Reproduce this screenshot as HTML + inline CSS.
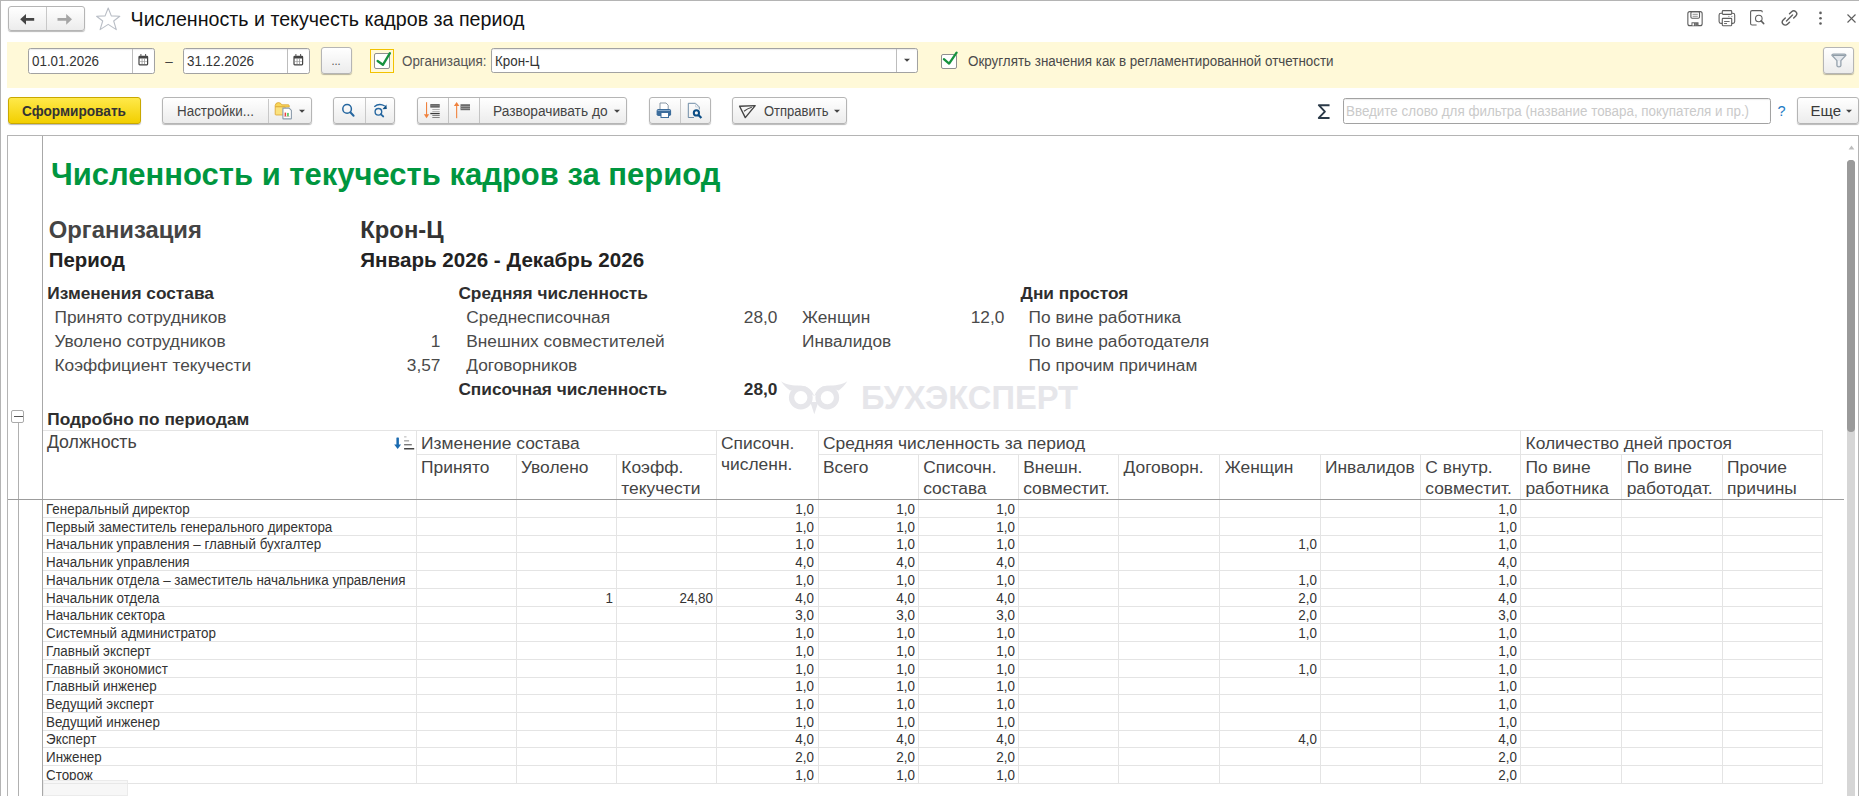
<!DOCTYPE html>
<html><head><meta charset="utf-8"><style>
html,body{margin:0;padding:0;}
body{width:1861px;height:796px;position:relative;overflow:hidden;background:#fff;font-family:"Liberation Sans",sans-serif;}
.t{position:absolute;white-space:pre;line-height:1;}
.r{position:absolute;}
</style></head><body>
<div class="r" style="left:0px;top:0px;width:1859px;height:1.2px;background:#b4b4b4;"></div>
<div class="r" style="left:0px;top:0px;width:1.2px;height:796px;background:#b4b4b4;"></div>
<div class="r" style="left:7.5px;top:6px;width:77px;height:25px;border:1px solid #b5b5b5;border-radius:3px;background:linear-gradient(#ffffff,#ececec);box-shadow:0 1px 1px rgba(0,0,0,0.28);box-sizing:border-box;"></div>
<div class="r" style="left:46px;top:7px;width:1px;height:23px;background:#c8c8c8;"></div>
<svg class="r" style="left:19px;top:12px;" width="16" height="14" viewBox="0 0 16 14"><path d="M1.2 7.3 L7 1.9 L7 5.9 L15.2 5.9 L15.2 8.7 L7 8.7 L7 12.8 Z" fill="#454545"/></svg>
<svg class="r" style="left:57px;top:12px;" width="16" height="14" viewBox="0 0 16 14"><path d="M15 7.3 L9.2 1.9 L9.2 5.9 L0.5 5.9 L0.5 8.7 L9.2 8.7 L9.2 12.8 Z" fill="#a5a5a5"/></svg>
<svg class="r" style="left:92px;top:4px;" width="32" height="30" viewBox="0 0 32 30"><path d="M16.2 4 L19.3 11.9 L27.8 12.3 L21.7 17 L24.3 25.6 L16.2 20.4 L8.1 25.6 L10.7 17 L4.6 12.3 L13.1 11.9 Z" fill="none" stroke="#b9bec6" stroke-width="1.1" stroke-linejoin="round"/></svg>
<div class="t" style="left:130.60px;top:10.00px;font-size:19.65px;color:#111;font-weight:normal;">Численность и текучесть кадров за период</div>
<svg class="r" style="left:1680px;top:5px;" width="60" height="27" viewBox="0 0 60 27"><rect x="7.85" y="6.65" width="14.3" height="14" rx="2" fill="none" stroke="#5e5e5e" stroke-width="1.1"/><rect x="10.9" y="6.6" width="8.6" height="6.7" rx="1.2" fill="none" stroke="#5e5e5e" stroke-width="1.1"/><line x1="12.6" y1="9.3" x2="17.8" y2="9.3" stroke="#888" stroke-width="0.9"/><line x1="12.6" y1="11.3" x2="17.8" y2="11.3" stroke="#888" stroke-width="0.9"/><rect x="11.5" y="17.3" width="7" height="3.5" fill="#5e5e5e"/><rect x="12.4" y="18.3" width="1.7" height="2.2" fill="#fff"/><rect x="15.6" y="18.2" width="0.4" height="2.6" fill="#bbb"/><rect x="16.8" y="18.2" width="0.4" height="2.6" fill="#bbb"/><rect x="39.1" y="8.3" width="15.6" height="10.1" rx="1.8" fill="none" stroke="#5e5e5e" stroke-width="1.1"/><rect x="42.3" y="5.6" width="9.4" height="3.8" rx="0.8" fill="#fff" stroke="#5e5e5e" stroke-width="1.1"/><rect x="42.3" y="13.4" width="9.4" height="7.3" rx="0.6" fill="#fff" stroke="#5e5e5e" stroke-width="1.1"/><line x1="44.1" y1="16.5" x2="49.6" y2="16.5" stroke="#5e5e5e" stroke-width="0.9"/><line x1="44.1" y1="18.5" x2="47" y2="18.5" stroke="#5e5e5e" stroke-width="0.9"/><rect x="48.3" y="10.9" width="1.1" height="0.9" fill="#777"/><rect x="51.3" y="10.9" width="1.1" height="0.9" fill="#777"/></svg>
<svg class="r" style="left:1749px;top:9px;" width="19" height="18" viewBox="0 0 19 18"><path d="M13.3 3.3 V3 Q13.3 1.6 11.9 1.6 H3.1 Q1.6 1.6 1.6 3.1 V14.6 Q1.6 16 3.1 16 H7.6" fill="none" stroke="#5e5e5e" stroke-width="1.1"/><circle cx="9.8" cy="9.5" r="3.3" fill="none" stroke="#5e5e5e" stroke-width="1.1"/><line x1="12.2" y1="12" x2="14.6" y2="14.5" stroke="#5e5e5e" stroke-width="1.8" stroke-linecap="round"/></svg>
<svg class="r" style="left:1780px;top:9px;" width="19" height="19" viewBox="0 0 19 19"><path d="M9.5 4.8 L11.6 2.7 A2.9 2.9 0 0 1 15.8 6.9 L13.7 9 M5.3 9 L3.2 11.1 A2.9 2.9 0 0 0 7.4 15.3 L9.5 13.2 M6.5 12 L12.5 6" fill="none" stroke="#5e5e5e" stroke-width="1.4" stroke-linecap="round"/></svg>
<svg class="r" style="left:1817px;top:10px;" width="7" height="17" viewBox="0 0 7 17"><circle cx="3.5" cy="2.9" r="1.3" fill="#5e5e5e"/><circle cx="3.5" cy="8.2" r="1.3" fill="#5e5e5e"/><circle cx="3.5" cy="13.5" r="1.3" fill="#5e5e5e"/></svg>
<svg class="r" style="left:1846px;top:13px;" width="11" height="11" viewBox="0 0 11 11"><path d="M1.5 1.5 L9.5 9.5 M9.5 1.5 L1.5 9.5" stroke="#5e5e5e" stroke-width="1.1"/></svg>
<div class="r" style="left:7px;top:42px;width:1852px;height:45.5px;background:#fff9d8;"></div>
<div class="r" style="left:27.5px;top:48px;width:127px;height:26px;border:1px solid #a2a2a2;border-radius:2.5px;background:#fff;box-sizing:border-box;box-shadow:inset 0 1px 1px rgba(0,0,0,0.08);"></div>
<div class="r" style="left:131.5px;top:49px;width:1px;height:24px;background:#bdbdbd;"></div>
<div class="t" style="left:31.70px;top:54.00px;font-size:14.47px;color:#333;font-weight:normal;transform:scaleX(0.9259);transform-origin:left top;">01.01.2026</div>
<svg class="r" style="left:137.8px;top:53.5px;" width="11" height="12" viewBox="0 0 11 12"><rect x="0.4" y="1.8" width="9.8" height="9.6" rx="1.3" fill="#444"/><rect x="1.6" y="4.5" width="7.4" height="5.7" fill="#fff"/><rect x="3.7" y="4.5" width="0.7" height="5.7" fill="#888"/><rect x="6.2" y="4.5" width="0.7" height="5.7" fill="#888"/><rect x="1.6" y="7.2" width="7.4" height="0.6" fill="#999"/><rect x="2.4" y="0" width="1" height="2.6" fill="#555"/><rect x="7.1" y="0" width="1" height="2.6" fill="#555"/></svg>
<div class="t" style="left:-231.40px;width:800px;text-align:center;top:54.00px;font-size:14.47px;color:#444;font-weight:normal;transform:scaleX(0.9259);transform-origin:center top;">–</div>
<div class="r" style="left:183px;top:48px;width:127px;height:26px;border:1px solid #a2a2a2;border-radius:2.5px;background:#fff;box-sizing:border-box;box-shadow:inset 0 1px 1px rgba(0,0,0,0.08);"></div>
<div class="r" style="left:287px;top:49px;width:1px;height:24px;background:#bdbdbd;"></div>
<div class="t" style="left:187.20px;top:54.00px;font-size:14.47px;color:#333;font-weight:normal;transform:scaleX(0.9259);transform-origin:left top;">31.12.2026</div>
<svg class="r" style="left:293.3px;top:53.5px;" width="11" height="12" viewBox="0 0 11 12"><rect x="0.4" y="1.8" width="9.8" height="9.6" rx="1.3" fill="#444"/><rect x="1.6" y="4.5" width="7.4" height="5.7" fill="#fff"/><rect x="3.7" y="4.5" width="0.7" height="5.7" fill="#888"/><rect x="6.2" y="4.5" width="0.7" height="5.7" fill="#888"/><rect x="1.6" y="7.2" width="7.4" height="0.6" fill="#999"/><rect x="2.4" y="0" width="1" height="2.6" fill="#555"/><rect x="7.1" y="0" width="1" height="2.6" fill="#555"/></svg>
<div class="r" style="left:321px;top:47.3px;width:30.5px;height:26.5px;border:1px solid #b5b5b5;border-radius:3px;background:linear-gradient(#ffffff,#ececec);box-shadow:0 1px 1px rgba(0,0,0,0.28);box-sizing:border-box;"></div>
<div class="t" style="left:-64.00px;width:800px;text-align:center;top:56.00px;font-size:11.88px;color:#555;font-weight:normal;transform:scaleX(0.9259);transform-origin:center top;">...</div>
<div class="r" style="left:369.5px;top:48.8px;width:24.5px;height:24.2px;border:1px solid #f2c200;box-sizing:border-box;"></div>
<div class="r" style="left:374px;top:53px;width:16px;height:15.5px;border:1px solid #8f8f8f;border-radius:2px;background:#fff;box-sizing:border-box;"></div>
<svg class="r" style="left:373px;top:49px;" width="20" height="20" viewBox="0 0 20 20"><path d="M4.6 12 L9.9 15.8 L16.9 4.2" fill="none" stroke="#16923e" stroke-width="2.3" stroke-linecap="round" stroke-linejoin="round"/></svg>
<div class="t" style="left:401.50px;top:54.00px;font-size:14.47px;color:#555;font-weight:normal;transform:scaleX(0.9259);transform-origin:left top;">Организация:</div>
<div class="r" style="left:490.8px;top:48.4px;width:427.5px;height:25px;border:1px solid #a2a2a2;border-radius:2.5px;background:#fff;box-sizing:border-box;box-shadow:inset 0 1px 1px rgba(0,0,0,0.08);"></div>
<div class="r" style="left:896px;top:49px;width:1px;height:23px;background:#bdbdbd;"></div>
<div class="t" style="left:495.00px;top:54.00px;font-size:14.47px;color:#333;font-weight:normal;transform:scaleX(0.9259);transform-origin:left top;">Крон-Ц</div>
<svg class="r" style="left:902.5px;top:58px;" width="8" height="5" viewBox="0 0 8 5"><path d="M1 0.8 H7 L4 3.8 Z" fill="#444"/></svg>
<div class="r" style="left:941px;top:53.5px;width:15.5px;height:15px;border:1px solid #8f8f8f;border-radius:2px;background:#fff;box-sizing:border-box;"></div>
<svg class="r" style="left:940px;top:48px;" width="20" height="20" viewBox="0 0 20 20"><path d="M3.9 11.2 L9.1 15.6 L16.6 4.6" fill="none" stroke="#16923e" stroke-width="2.3" stroke-linecap="round" stroke-linejoin="round"/></svg>
<div class="t" style="left:968.30px;top:54.00px;font-size:14.47px;color:#4a4a4a;font-weight:normal;transform:scaleX(0.9259);transform-origin:left top;">Округлять значения как в регламентированной отчетности</div>
<div class="r" style="left:1823.3px;top:47.3px;width:30.4px;height:26.4px;border:1px solid #b5b5b5;border-radius:3px;background:linear-gradient(#ffffff,#ececec);box-shadow:0 1px 1px rgba(0,0,0,0.28);box-sizing:border-box;"></div>
<svg class="r" style="left:1830px;top:52px;" width="18" height="17" viewBox="0 0 18 17"><path d="M1.9 3.2 Q1.9 2.2 3.4 2.2 H14.4 Q15.9 2.2 15.9 3.2 L10.9 8.6 V13.5 Q10.9 14.9 8.9 14.9 Q6.9 14.9 6.9 13.5 V8.6 Z" fill="#e3e7ec" stroke="#98a4af" stroke-width="1.3" stroke-linejoin="round"/><path d="M8.9 9 V13.3" stroke="#fff" stroke-width="0.9"/><path d="M3 3.4 H14.8" stroke="#8794a0" stroke-width="1"/></svg>
<div class="r" style="left:7.5px;top:97.3px;width:133px;height:26.7px;border:1px solid #c9a800;border-radius:3px;background:linear-gradient(#ffe94a,#f2cf00);box-shadow:0 1px 1px rgba(0,0,0,0.28);box-sizing:border-box;"></div>
<div class="t" style="left:-326.00px;width:800px;text-align:center;top:104.00px;font-size:14.74px;color:#333;font-weight:bold;transform:scaleX(0.9259);transform-origin:center top;">Сформировать</div>
<div class="r" style="left:162.3px;top:97.3px;width:149.5px;height:26.5px;border:1px solid #b5b5b5;border-radius:3px;background:linear-gradient(#ffffff,#ececec);box-shadow:0 1px 1px rgba(0,0,0,0.28);box-sizing:border-box;"></div>
<div class="r" style="left:268px;top:98.5px;width:1px;height:24.5px;background:#c8c8c8;"></div>
<div class="t" style="left:176.50px;top:104.00px;font-size:14.47px;color:#444;font-weight:normal;transform:scaleX(0.9259);transform-origin:left top;">Настройки...</div>
<svg class="r" style="left:273px;top:100px;" width="22" height="21" viewBox="0 0 22 21"><path d="M2.2 5.5 Q2.6 2.6 5.4 2.6 Q7.8 2.6 8.8 4.8 H15.4 Q16.2 4.8 16.2 5.8 V7 H2.2 Z" fill="#f8d659" stroke="#dba22e" stroke-width="0.8"/><rect x="2.2" y="6.8" width="10" height="8.2" rx="0.8" fill="#fbe27e" stroke="#dba22e" stroke-width="0.8"/><path d="M9.9 8.1 H16.1 L18.4 10.4 V18.4 Q18.4 18.9 17.9 18.9 H10.4 Q9.9 18.9 9.9 18.4 Z" fill="#fff" stroke="#8c9cac" stroke-width="1.1"/><rect x="11.6" y="12.6" width="1.5" height="3.8" fill="#e84040"/><rect x="14.2" y="12.9" width="1.5" height="3.5" fill="#3fbf4f"/><rect x="11.2" y="16.5" width="5.5" height="0.5" fill="#c9a0a0"/></svg>
<svg class="r" style="left:298px;top:109px;" width="8" height="5" viewBox="0 0 8 5"><path d="M1 0.8 H7 L4 3.8 Z" fill="#444"/></svg>
<div class="r" style="left:333.4px;top:97.2px;width:62px;height:26.8px;border:1px solid #b5b5b5;border-radius:3px;background:linear-gradient(#ffffff,#ececec);box-shadow:0 1px 1px rgba(0,0,0,0.28);box-sizing:border-box;"></div>
<div class="r" style="left:364.5px;top:98.2px;width:1px;height:25px;background:#c8c8c8;"></div>
<svg class="r" style="left:338px;top:100px;" width="20" height="20" viewBox="0 0 20 20"><circle cx="9.1" cy="8.9" r="4.3" fill="none" stroke="#2667a0" stroke-width="1.5"/><line x1="12.3" y1="12.2" x2="15.6" y2="15.8" stroke="#2667a0" stroke-width="2" stroke-linecap="round"/></svg>
<svg class="r" style="left:366px;top:100px;" width="24" height="20" viewBox="0 0 24 20"><circle cx="12.4" cy="11.8" r="3.3" fill="none" stroke="#2667a0" stroke-width="1.4"/><line x1="14.7" y1="14.2" x2="17.3" y2="16.5" stroke="#2667a0" stroke-width="1.7" stroke-linecap="round"/><path d="M8.3 6.8 Q13 2.8 18.8 6" fill="none" stroke="#2667a0" stroke-width="1.4"/><path d="M20.8 9 L16.4 9.3 L20.4 4.6 Z" fill="#0e4f86"/></svg>
<div class="r" style="left:416.8px;top:97.2px;width:209.8px;height:26.8px;border:1px solid #b5b5b5;border-radius:3px;background:linear-gradient(#ffffff,#ececec);box-shadow:0 1px 1px rgba(0,0,0,0.28);box-sizing:border-box;"></div>
<div class="r" style="left:448px;top:98.2px;width:1px;height:25px;background:#c4c4c4;"></div>
<div class="r" style="left:479px;top:98.2px;width:1px;height:25px;background:#c4c4c4;"></div>
<svg class="r" style="left:423px;top:100px;" width="20" height="20" viewBox="0 0 20 20"><rect x="3" y="2.2" width="1.1" height="13" fill="#f0823e"/><path d="M0.9 14.3 L3.55 18.3 L6.2 14.3 Z" fill="#f0823e"/><rect x="7.3" y="4.1" width="9.4" height="3.5" fill="#5a5a5a"/><rect x="7.3" y="5.5" width="9.4" height="0.7" fill="#9a9a9a"/><rect x="9.3" y="9.1" width="7.4" height="0.8" fill="#a0a0a0"/><rect x="9.3" y="11.1" width="7.4" height="0.8" fill="#a8a8a8"/><rect x="7.3" y="12.9" width="9.4" height="1.3" fill="#3a3a3a"/><rect x="9.3" y="15.1" width="7.4" height="0.9" fill="#777"/><rect x="9.3" y="17.1" width="7.4" height="0.9" fill="#777"/></svg>
<svg class="r" style="left:453px;top:100px;" width="20" height="20" viewBox="0 0 20 20"><rect x="3.1" y="4.6" width="1.1" height="13.6" fill="#f0823e"/><path d="M0.9 5.9 L3.65 2 L6.4 5.9 Z" fill="#f0823e"/><rect x="7.5" y="4.2" width="9.5" height="6" fill="#6a6a6a"/><rect x="7.5" y="6.1" width="9.5" height="0.8" fill="#a5a5a5"/><rect x="7.5" y="8.0" width="9.5" height="0.7" fill="#a5a5a5"/></svg>
<div class="t" style="left:492.90px;top:104.00px;font-size:14.85px;color:#444;font-weight:normal;transform:scaleX(0.9259);transform-origin:left top;">Разворачивать до</div>
<svg class="r" style="left:612.5px;top:109px;" width="8" height="5" viewBox="0 0 8 5"><path d="M1 0.8 H7 L4 3.8 Z" fill="#444"/></svg>
<div class="r" style="left:648.9px;top:97.3px;width:61.7px;height:26.5px;border:1px solid #b5b5b5;border-radius:3px;background:linear-gradient(#ffffff,#ececec);box-shadow:0 1px 1px rgba(0,0,0,0.28);box-sizing:border-box;"></div>
<div class="r" style="left:680px;top:98.5px;width:1px;height:24.5px;background:#c8c8c8;"></div>
<svg class="r" style="left:654px;top:100px;" width="20" height="20" viewBox="0 0 20 20"><path d="M6 3 H12 L14.2 5.2 V10 H6 Z" fill="#fff" stroke="#7d8c9b" stroke-width="0.9"/><rect x="2.6" y="9" width="14.5" height="7" rx="1.8" fill="#3d6d9c"/><rect x="3.6" y="10.2" width="12.5" height="0.8" fill="#9cbad6"/><rect x="7" y="12.5" width="7.5" height="5" fill="#fff" stroke="#3d6d9c" stroke-width="1"/></svg>
<svg class="r" style="left:686px;top:100px;" width="20" height="20" viewBox="0 0 20 20"><path d="M8 17.5 H2.3 V3.3 H9.6 L13.3 7 V9.5" fill="none" stroke="#5f7f9c" stroke-width="0.9"/><path d="M9.6 3.3 V7 H13.3" fill="none" stroke="#b8c6d4" stroke-width="0.7"/><circle cx="10.4" cy="12.9" r="2.6" fill="none" stroke="#0b4d85" stroke-width="2"/><line x1="12.4" y1="14.9" x2="15.4" y2="18" stroke="#0b4d85" stroke-width="2.2"/></svg>
<div class="r" style="left:732.4px;top:97.3px;width:115px;height:26.5px;border:1px solid #b5b5b5;border-radius:3px;background:linear-gradient(#ffffff,#ececec);box-shadow:0 1px 1px rgba(0,0,0,0.28);box-sizing:border-box;"></div>
<svg class="r" style="left:737px;top:100px;" width="22" height="20" viewBox="0 0 22 20"><path d="M2.6 6.2 L18.2 5.6 L8.3 17.6 Z" fill="none" stroke="#444" stroke-width="1.4" stroke-linejoin="round"/><path d="M7 11.2 Q10.5 8.6 14.8 7.3" fill="none" stroke="#444" stroke-width="1.1"/></svg>
<div class="t" style="left:763.50px;top:104.00px;font-size:14.04px;color:#444;font-weight:normal;transform:scaleX(0.9259);transform-origin:left top;">Отправить</div>
<svg class="r" style="left:833px;top:109px;" width="8" height="5" viewBox="0 0 8 5"><path d="M1 0.8 H7 L4 3.8 Z" fill="#444"/></svg>
<svg class="r" style="left:1310px;top:98px;" width="30" height="26" viewBox="0 0 30 26"><path d="M18.6 7.2 H8.8 L14.9 13.6 L8.8 19.95 H18.6" fill="none" stroke="#2b3a48" stroke-width="1.9" stroke-linecap="square" stroke-linejoin="round"/></svg>
<div class="r" style="left:1343px;top:98px;width:427.5px;height:25.7px;border:1px solid #a2a2a2;border-radius:2.5px;background:#fff;box-sizing:border-box;box-shadow:inset 0 1px 1px rgba(0,0,0,0.08);"></div>
<div class="t" style="left:1346.30px;top:104.00px;font-size:14.47px;color:#cacaca;font-weight:normal;transform:scaleX(0.9259);transform-origin:left top;">Введите слово для фильтра (название товара, покупателя и пр.)</div>
<div class="t" style="left:1381.50px;width:800px;text-align:center;top:104.00px;font-size:14.5px;color:#1d7ac4;font-weight:normal;">?</div>
<div class="r" style="left:1796.5px;top:97.4px;width:62.2px;height:26.8px;border:1px solid #b5b5b5;border-radius:3px;background:linear-gradient(#ffffff,#ececec);box-shadow:0 1px 1px rgba(0,0,0,0.28);box-sizing:border-box;"></div>
<div class="t" style="left:1810.50px;top:103.00px;font-size:15.0px;color:#3a3a3a;font-weight:normal;">Еще</div>
<svg class="r" style="left:1845px;top:109px;" width="8" height="5" viewBox="0 0 8 5"><path d="M1 0.8 H7 L4 3.8 Z" fill="#444"/></svg>
<div class="r" style="left:7px;top:135px;width:1852px;height:661px;border:1px solid #b4b4b4;border-bottom:none;box-sizing:border-box;background:#fff;"></div>
<div class="r" style="left:41.7px;top:136px;width:1px;height:660px;background:#a8a8a8;"></div>
<svg class="r" style="left:1847px;top:143px;" width="9" height="7" viewBox="0 0 9 7"><path d="M1.6 6.4 H7.4 L4.5 2.4 Z" fill="#bdbdbd"/></svg>
<div class="r" style="left:1847px;top:159.7px;width:8.2px;height:272.5px;background:#9a9a9a;border-radius:4px;"></div>
<div class="r" style="left:1847px;top:425px;width:8.2px;height:371px;background:#d6d6d6;"></div>
<div class="r" style="left:1847px;top:159.7px;width:8.2px;height:272.5px;background:#9a9a9a;border-radius:4px;"></div>
<div class="t" style="left:51.00px;top:159.00px;font-size:31.0px;color:#00963f;font-weight:bold;">Численность и текучесть кадров за период</div>
<div class="t" style="left:48.80px;top:218.00px;font-size:23.8px;color:#444;font-weight:bold;">Организация</div>
<div class="t" style="left:360.30px;top:218.00px;font-size:23.8px;color:#333;font-weight:bold;">Крон-Ц</div>
<div class="t" style="left:48.80px;top:250.00px;font-size:20.4px;color:#222;font-weight:bold;">Период</div>
<div class="t" style="left:360.30px;top:250.00px;font-size:20.6px;color:#222;font-weight:bold;">Январь 2026 - Декабрь 2026</div>
<div class="t" style="left:47.30px;top:285.00px;font-size:17.3px;color:#2e2e2e;font-weight:bold;">Изменения состава</div>
<div class="t" style="left:54.50px;top:309.00px;font-size:17.3px;color:#4a4a4a;font-weight:normal;">Принято сотрудников</div>
<div class="t" style="left:54.50px;top:333.00px;font-size:17.3px;color:#4a4a4a;font-weight:normal;">Уволено сотрудников</div>
<div class="t" style="left:-359.60px;width:800px;text-align:right;top:333.00px;font-size:17.3px;color:#4a4a4a;font-weight:normal;">1</div>
<div class="t" style="left:54.50px;top:357.00px;font-size:17.3px;color:#4a4a4a;font-weight:normal;">Коэффициент текучести</div>
<div class="t" style="left:-359.60px;width:800px;text-align:right;top:357.00px;font-size:17.3px;color:#4a4a4a;font-weight:normal;">3,57</div>
<div class="t" style="left:458.40px;top:285.00px;font-size:17.3px;color:#2e2e2e;font-weight:bold;">Средняя численность</div>
<div class="t" style="left:466.30px;top:309.00px;font-size:17.3px;color:#4a4a4a;font-weight:normal;">Среднесписочная</div>
<div class="t" style="left:-22.60px;width:800px;text-align:right;top:309.00px;font-size:17.3px;color:#4a4a4a;font-weight:normal;">28,0</div>
<div class="t" style="left:466.30px;top:333.00px;font-size:17.3px;color:#4a4a4a;font-weight:normal;">Внешних совместителей</div>
<div class="t" style="left:466.30px;top:357.00px;font-size:17.3px;color:#4a4a4a;font-weight:normal;">Договорников</div>
<div class="t" style="left:458.40px;top:381.00px;font-size:17.3px;color:#2e2e2e;font-weight:bold;">Списочная численность</div>
<div class="t" style="left:-22.60px;width:800px;text-align:right;top:381.00px;font-size:17.3px;color:#2e2e2e;font-weight:bold;">28,0</div>
<div class="t" style="left:802.00px;top:309.00px;font-size:17.3px;color:#4a4a4a;font-weight:normal;">Женщин</div>
<div class="t" style="left:204.40px;width:800px;text-align:right;top:309.00px;font-size:17.3px;color:#4a4a4a;font-weight:normal;">12,0</div>
<div class="t" style="left:802.00px;top:333.00px;font-size:17.3px;color:#4a4a4a;font-weight:normal;">Инвалидов</div>
<div class="t" style="left:1020.60px;top:285.00px;font-size:17.3px;color:#2e2e2e;font-weight:bold;">Дни простоя</div>
<div class="t" style="left:1028.60px;top:309.00px;font-size:17.3px;color:#4a4a4a;font-weight:normal;">По вине работника</div>
<div class="t" style="left:1028.60px;top:333.00px;font-size:17.3px;color:#4a4a4a;font-weight:normal;">По вине работодателя</div>
<div class="t" style="left:1028.60px;top:357.00px;font-size:17.3px;color:#4a4a4a;font-weight:normal;">По прочим причинам</div>
<svg class="r" style="left:770px;top:370px;" width="90" height="50" viewBox="0 0 90 50"><g fill="none" stroke="#e6e6ea" stroke-width="5.3"><circle cx="30.8" cy="27.6" r="9.25"/><circle cx="57.3" cy="27.6" r="9.25"/></g><path d="M11 11.3 C16 15 23 15.7 30.8 15.7 C38 15.7 42 20 44.3 26 C46.5 20 50.5 15.7 57.3 15.7 C65 15.7 72 15 77.3 11.3 C74.6 15.5 71.6 18.5 68.6 20.5 L57.3 17 L44.3 26 L30.8 17 L20 20.5 C17 18.5 14 15.5 11 11.3 Z" fill="#e6e6ea"/><path d="M40.3 32 L48.3 32 L44.3 44.3 Z" fill="#e6e6ea"/></svg>
<div class="t" style="left:861.00px;top:382.00px;font-size:32.7px;color:#e6e6ea;font-weight:bold;">БУХЭКСПЕРТ</div>
<div class="r" style="left:11.3px;top:409.6px;width:13px;height:13px;border:1px solid #aaa;border-radius:2px;background:#fff;box-sizing:border-box;"></div>
<div class="r" style="left:13.8px;top:415.6px;width:9px;height:1.3px;background:#555;"></div>
<div class="r" style="left:17.5px;top:422.5px;width:1px;height:374px;background:#b0b0b0;"></div>
<div class="t" style="left:47.30px;top:411.00px;font-size:17.3px;color:#2e2e2e;font-weight:bold;">Подробно по периодам</div>
<div class="r" style="left:43px;top:430px;width:1780px;height:1px;background:#e4e4e4;"></div>
<div class="r" style="left:415.8px;top:454px;width:299.99999999999994px;height:1px;background:#e4e4e4;"></div>
<div class="r" style="left:817.6px;top:454px;width:1005.3000000000001px;height:1px;background:#e4e4e4;"></div>
<div class="r" style="left:415.8px;top:430px;width:1px;height:69px;background:#e4e4e4;"></div>
<div class="r" style="left:715.8px;top:430px;width:1px;height:69px;background:#e4e4e4;"></div>
<div class="r" style="left:817.6px;top:430px;width:1px;height:69px;background:#e4e4e4;"></div>
<div class="r" style="left:1520.1px;top:430px;width:1px;height:69px;background:#e4e4e4;"></div>
<div class="r" style="left:1821.9px;top:430px;width:1px;height:69px;background:#e4e4e4;"></div>
<div class="r" style="left:515.6px;top:454px;width:1px;height:45px;background:#e4e4e4;"></div>
<div class="r" style="left:616.0px;top:454px;width:1px;height:45px;background:#e4e4e4;"></div>
<div class="r" style="left:917.9px;top:454px;width:1px;height:45px;background:#e4e4e4;"></div>
<div class="r" style="left:1017.9px;top:454px;width:1px;height:45px;background:#e4e4e4;"></div>
<div class="r" style="left:1118.2px;top:454px;width:1px;height:45px;background:#e4e4e4;"></div>
<div class="r" style="left:1219.4px;top:454px;width:1px;height:45px;background:#e4e4e4;"></div>
<div class="r" style="left:1319.7px;top:454px;width:1px;height:45px;background:#e4e4e4;"></div>
<div class="r" style="left:1420.0px;top:454px;width:1px;height:45px;background:#e4e4e4;"></div>
<div class="r" style="left:1621.4px;top:454px;width:1px;height:45px;background:#e4e4e4;"></div>
<div class="r" style="left:1721.8px;top:454px;width:1px;height:45px;background:#e4e4e4;"></div>
<div class="r" style="left:8px;top:499px;width:1836px;height:1px;background:#9c9c9c;"></div>
<div class="t" style="left:46.90px;top:434.00px;font-size:17.75px;color:#444;font-weight:normal;">Должность</div>
<svg class="r" style="left:390px;top:432px;" width="26" height="20" viewBox="0 0 26 20"><rect x="6.4" y="5.5" width="2.5" height="8" rx="0.6" fill="#1a6ab0"/><path d="M4.2 12.4 L11.1 12.4 L7.65 17.1 Z" fill="#1a6ab0"/><rect x="14.1" y="4.2" width="2.4" height="1.3" fill="#c4c4c4"/><rect x="14.1" y="8.1" width="5" height="1.4" fill="#a8a8a8"/><rect x="14.1" y="12" width="7.7" height="1.4" fill="#787878"/><rect x="14.1" y="16" width="10.1" height="1.5" fill="#444"/></svg>
<div class="t" style="left:421.10px;top:435.00px;font-size:17.4px;color:#444;font-weight:normal;">Изменение состава</div>
<div class="t" style="left:421.10px;top:459.00px;font-size:17.4px;color:#444;font-weight:normal;">Принято</div>
<div class="t" style="left:521.00px;top:459.00px;font-size:17.4px;color:#444;font-weight:normal;">Уволено</div>
<div class="t" style="left:621.30px;top:459.00px;font-size:17.4px;color:#444;font-weight:normal;">Коэфф.</div>
<div class="t" style="left:621.30px;top:480.00px;font-size:17.4px;color:#444;font-weight:normal;">текучести</div>
<div class="t" style="left:721.00px;top:435.00px;font-size:17.4px;color:#444;font-weight:normal;">Списочн.</div>
<div class="t" style="left:721.00px;top:456.00px;font-size:17.4px;color:#444;font-weight:normal;">численн.</div>
<div class="t" style="left:823.00px;top:435.00px;font-size:17.4px;color:#444;font-weight:normal;">Средняя численность за период</div>
<div class="t" style="left:822.90px;top:459.00px;font-size:17.4px;color:#444;font-weight:normal;">Всего</div>
<div class="t" style="left:923.20px;top:459.00px;font-size:17.4px;color:#444;font-weight:normal;">Списочн.</div>
<div class="t" style="left:923.20px;top:480.00px;font-size:17.4px;color:#444;font-weight:normal;">состава</div>
<div class="t" style="left:1023.20px;top:459.00px;font-size:17.4px;color:#444;font-weight:normal;">Внешн.</div>
<div class="t" style="left:1023.20px;top:480.00px;font-size:17.4px;color:#444;font-weight:normal;">совместит.</div>
<div class="t" style="left:1123.50px;top:459.00px;font-size:17.4px;color:#444;font-weight:normal;">Договорн.</div>
<div class="t" style="left:1224.70px;top:459.00px;font-size:17.4px;color:#444;font-weight:normal;">Женщин</div>
<div class="t" style="left:1325.00px;top:459.00px;font-size:17.4px;color:#444;font-weight:normal;">Инвалидов</div>
<div class="t" style="left:1425.30px;top:459.00px;font-size:17.4px;color:#444;font-weight:normal;">С внутр.</div>
<div class="t" style="left:1425.30px;top:480.00px;font-size:17.4px;color:#444;font-weight:normal;">совместит.</div>
<div class="t" style="left:1525.40px;top:459.00px;font-size:17.4px;color:#444;font-weight:normal;">По вине</div>
<div class="t" style="left:1525.40px;top:480.00px;font-size:17.4px;color:#444;font-weight:normal;">работника</div>
<div class="t" style="left:1626.70px;top:459.00px;font-size:17.4px;color:#444;font-weight:normal;">По вине</div>
<div class="t" style="left:1626.70px;top:480.00px;font-size:17.4px;color:#444;font-weight:normal;">работодат.</div>
<div class="t" style="left:1727.10px;top:459.00px;font-size:17.4px;color:#444;font-weight:normal;">Прочие</div>
<div class="t" style="left:1727.10px;top:480.00px;font-size:17.4px;color:#444;font-weight:normal;">причины</div>
<div class="t" style="left:1525.50px;top:435.00px;font-size:17.4px;color:#444;font-weight:normal;">Количество дней простоя</div>
<div class="r" style="left:43px;top:517px;width:1780px;height:1px;background:#e4e4e4;"></div>
<div class="t" style="left:46.30px;top:502.00px;font-size:14.47px;color:#333;font-weight:normal;transform:scaleX(0.9259);transform-origin:left top;">Генеральный директор</div>
<div class="t" style="left:14.40px;width:800px;text-align:right;top:502.00px;font-size:14.47px;color:#333;font-weight:normal;transform:scaleX(0.9259);transform-origin:right top;">1,0</div>
<div class="t" style="left:114.70px;width:800px;text-align:right;top:502.00px;font-size:14.47px;color:#333;font-weight:normal;transform:scaleX(0.9259);transform-origin:right top;">1,0</div>
<div class="t" style="left:214.70px;width:800px;text-align:right;top:502.00px;font-size:14.47px;color:#333;font-weight:normal;transform:scaleX(0.9259);transform-origin:right top;">1,0</div>
<div class="t" style="left:716.90px;width:800px;text-align:right;top:502.00px;font-size:14.47px;color:#333;font-weight:normal;transform:scaleX(0.9259);transform-origin:right top;">1,0</div>
<div class="r" style="left:43px;top:535px;width:1780px;height:1px;background:#e4e4e4;"></div>
<div class="t" style="left:46.30px;top:520.00px;font-size:14.47px;color:#333;font-weight:normal;transform:scaleX(0.9259);transform-origin:left top;">Первый заместитель генерального директора</div>
<div class="t" style="left:14.40px;width:800px;text-align:right;top:520.00px;font-size:14.47px;color:#333;font-weight:normal;transform:scaleX(0.9259);transform-origin:right top;">1,0</div>
<div class="t" style="left:114.70px;width:800px;text-align:right;top:520.00px;font-size:14.47px;color:#333;font-weight:normal;transform:scaleX(0.9259);transform-origin:right top;">1,0</div>
<div class="t" style="left:214.70px;width:800px;text-align:right;top:520.00px;font-size:14.47px;color:#333;font-weight:normal;transform:scaleX(0.9259);transform-origin:right top;">1,0</div>
<div class="t" style="left:716.90px;width:800px;text-align:right;top:520.00px;font-size:14.47px;color:#333;font-weight:normal;transform:scaleX(0.9259);transform-origin:right top;">1,0</div>
<div class="r" style="left:43px;top:552px;width:1780px;height:1px;background:#e4e4e4;"></div>
<div class="t" style="left:46.30px;top:537.00px;font-size:14.47px;color:#333;font-weight:normal;transform:scaleX(0.9259);transform-origin:left top;">Начальник управления – главный бухгалтер</div>
<div class="t" style="left:14.40px;width:800px;text-align:right;top:537.00px;font-size:14.47px;color:#333;font-weight:normal;transform:scaleX(0.9259);transform-origin:right top;">1,0</div>
<div class="t" style="left:114.70px;width:800px;text-align:right;top:537.00px;font-size:14.47px;color:#333;font-weight:normal;transform:scaleX(0.9259);transform-origin:right top;">1,0</div>
<div class="t" style="left:214.70px;width:800px;text-align:right;top:537.00px;font-size:14.47px;color:#333;font-weight:normal;transform:scaleX(0.9259);transform-origin:right top;">1,0</div>
<div class="t" style="left:516.50px;width:800px;text-align:right;top:537.00px;font-size:14.47px;color:#333;font-weight:normal;transform:scaleX(0.9259);transform-origin:right top;">1,0</div>
<div class="t" style="left:716.90px;width:800px;text-align:right;top:537.00px;font-size:14.47px;color:#333;font-weight:normal;transform:scaleX(0.9259);transform-origin:right top;">1,0</div>
<div class="r" style="left:43px;top:570px;width:1780px;height:1px;background:#e4e4e4;"></div>
<div class="t" style="left:46.30px;top:555.00px;font-size:14.47px;color:#333;font-weight:normal;transform:scaleX(0.9259);transform-origin:left top;">Начальник управления</div>
<div class="t" style="left:14.40px;width:800px;text-align:right;top:555.00px;font-size:14.47px;color:#333;font-weight:normal;transform:scaleX(0.9259);transform-origin:right top;">4,0</div>
<div class="t" style="left:114.70px;width:800px;text-align:right;top:555.00px;font-size:14.47px;color:#333;font-weight:normal;transform:scaleX(0.9259);transform-origin:right top;">4,0</div>
<div class="t" style="left:214.70px;width:800px;text-align:right;top:555.00px;font-size:14.47px;color:#333;font-weight:normal;transform:scaleX(0.9259);transform-origin:right top;">4,0</div>
<div class="t" style="left:716.90px;width:800px;text-align:right;top:555.00px;font-size:14.47px;color:#333;font-weight:normal;transform:scaleX(0.9259);transform-origin:right top;">4,0</div>
<div class="r" style="left:43px;top:588px;width:1780px;height:1px;background:#e4e4e4;"></div>
<div class="t" style="left:46.30px;top:573.00px;font-size:14.47px;color:#333;font-weight:normal;transform:scaleX(0.9259);transform-origin:left top;">Начальник отдела – заместитель начальника управления</div>
<div class="t" style="left:14.40px;width:800px;text-align:right;top:573.00px;font-size:14.47px;color:#333;font-weight:normal;transform:scaleX(0.9259);transform-origin:right top;">1,0</div>
<div class="t" style="left:114.70px;width:800px;text-align:right;top:573.00px;font-size:14.47px;color:#333;font-weight:normal;transform:scaleX(0.9259);transform-origin:right top;">1,0</div>
<div class="t" style="left:214.70px;width:800px;text-align:right;top:573.00px;font-size:14.47px;color:#333;font-weight:normal;transform:scaleX(0.9259);transform-origin:right top;">1,0</div>
<div class="t" style="left:516.50px;width:800px;text-align:right;top:573.00px;font-size:14.47px;color:#333;font-weight:normal;transform:scaleX(0.9259);transform-origin:right top;">1,0</div>
<div class="t" style="left:716.90px;width:800px;text-align:right;top:573.00px;font-size:14.47px;color:#333;font-weight:normal;transform:scaleX(0.9259);transform-origin:right top;">1,0</div>
<div class="r" style="left:43px;top:606px;width:1780px;height:1px;background:#e4e4e4;"></div>
<div class="t" style="left:46.30px;top:591.00px;font-size:14.47px;color:#333;font-weight:normal;transform:scaleX(0.9259);transform-origin:left top;">Начальник отдела</div>
<div class="t" style="left:-187.20px;width:800px;text-align:right;top:591.00px;font-size:14.47px;color:#333;font-weight:normal;transform:scaleX(0.9259);transform-origin:right top;">1</div>
<div class="t" style="left:-87.40px;width:800px;text-align:right;top:591.00px;font-size:14.47px;color:#333;font-weight:normal;transform:scaleX(0.9259);transform-origin:right top;">24,80</div>
<div class="t" style="left:14.40px;width:800px;text-align:right;top:591.00px;font-size:14.47px;color:#333;font-weight:normal;transform:scaleX(0.9259);transform-origin:right top;">4,0</div>
<div class="t" style="left:114.70px;width:800px;text-align:right;top:591.00px;font-size:14.47px;color:#333;font-weight:normal;transform:scaleX(0.9259);transform-origin:right top;">4,0</div>
<div class="t" style="left:214.70px;width:800px;text-align:right;top:591.00px;font-size:14.47px;color:#333;font-weight:normal;transform:scaleX(0.9259);transform-origin:right top;">4,0</div>
<div class="t" style="left:516.50px;width:800px;text-align:right;top:591.00px;font-size:14.47px;color:#333;font-weight:normal;transform:scaleX(0.9259);transform-origin:right top;">2,0</div>
<div class="t" style="left:716.90px;width:800px;text-align:right;top:591.00px;font-size:14.47px;color:#333;font-weight:normal;transform:scaleX(0.9259);transform-origin:right top;">4,0</div>
<div class="r" style="left:43px;top:623px;width:1780px;height:1px;background:#e4e4e4;"></div>
<div class="t" style="left:46.30px;top:608.00px;font-size:14.47px;color:#333;font-weight:normal;transform:scaleX(0.9259);transform-origin:left top;">Начальник сектора</div>
<div class="t" style="left:14.40px;width:800px;text-align:right;top:608.00px;font-size:14.47px;color:#333;font-weight:normal;transform:scaleX(0.9259);transform-origin:right top;">3,0</div>
<div class="t" style="left:114.70px;width:800px;text-align:right;top:608.00px;font-size:14.47px;color:#333;font-weight:normal;transform:scaleX(0.9259);transform-origin:right top;">3,0</div>
<div class="t" style="left:214.70px;width:800px;text-align:right;top:608.00px;font-size:14.47px;color:#333;font-weight:normal;transform:scaleX(0.9259);transform-origin:right top;">3,0</div>
<div class="t" style="left:516.50px;width:800px;text-align:right;top:608.00px;font-size:14.47px;color:#333;font-weight:normal;transform:scaleX(0.9259);transform-origin:right top;">2,0</div>
<div class="t" style="left:716.90px;width:800px;text-align:right;top:608.00px;font-size:14.47px;color:#333;font-weight:normal;transform:scaleX(0.9259);transform-origin:right top;">3,0</div>
<div class="r" style="left:43px;top:641px;width:1780px;height:1px;background:#e4e4e4;"></div>
<div class="t" style="left:46.30px;top:626.00px;font-size:14.47px;color:#333;font-weight:normal;transform:scaleX(0.9259);transform-origin:left top;">Системный администратор</div>
<div class="t" style="left:14.40px;width:800px;text-align:right;top:626.00px;font-size:14.47px;color:#333;font-weight:normal;transform:scaleX(0.9259);transform-origin:right top;">1,0</div>
<div class="t" style="left:114.70px;width:800px;text-align:right;top:626.00px;font-size:14.47px;color:#333;font-weight:normal;transform:scaleX(0.9259);transform-origin:right top;">1,0</div>
<div class="t" style="left:214.70px;width:800px;text-align:right;top:626.00px;font-size:14.47px;color:#333;font-weight:normal;transform:scaleX(0.9259);transform-origin:right top;">1,0</div>
<div class="t" style="left:516.50px;width:800px;text-align:right;top:626.00px;font-size:14.47px;color:#333;font-weight:normal;transform:scaleX(0.9259);transform-origin:right top;">1,0</div>
<div class="t" style="left:716.90px;width:800px;text-align:right;top:626.00px;font-size:14.47px;color:#333;font-weight:normal;transform:scaleX(0.9259);transform-origin:right top;">1,0</div>
<div class="r" style="left:43px;top:659px;width:1780px;height:1px;background:#e4e4e4;"></div>
<div class="t" style="left:46.30px;top:644.00px;font-size:14.47px;color:#333;font-weight:normal;transform:scaleX(0.9259);transform-origin:left top;">Главный эксперт</div>
<div class="t" style="left:14.40px;width:800px;text-align:right;top:644.00px;font-size:14.47px;color:#333;font-weight:normal;transform:scaleX(0.9259);transform-origin:right top;">1,0</div>
<div class="t" style="left:114.70px;width:800px;text-align:right;top:644.00px;font-size:14.47px;color:#333;font-weight:normal;transform:scaleX(0.9259);transform-origin:right top;">1,0</div>
<div class="t" style="left:214.70px;width:800px;text-align:right;top:644.00px;font-size:14.47px;color:#333;font-weight:normal;transform:scaleX(0.9259);transform-origin:right top;">1,0</div>
<div class="t" style="left:716.90px;width:800px;text-align:right;top:644.00px;font-size:14.47px;color:#333;font-weight:normal;transform:scaleX(0.9259);transform-origin:right top;">1,0</div>
<div class="r" style="left:43px;top:677px;width:1780px;height:1px;background:#e4e4e4;"></div>
<div class="t" style="left:46.30px;top:662.00px;font-size:14.47px;color:#333;font-weight:normal;transform:scaleX(0.9259);transform-origin:left top;">Главный экономист</div>
<div class="t" style="left:14.40px;width:800px;text-align:right;top:662.00px;font-size:14.47px;color:#333;font-weight:normal;transform:scaleX(0.9259);transform-origin:right top;">1,0</div>
<div class="t" style="left:114.70px;width:800px;text-align:right;top:662.00px;font-size:14.47px;color:#333;font-weight:normal;transform:scaleX(0.9259);transform-origin:right top;">1,0</div>
<div class="t" style="left:214.70px;width:800px;text-align:right;top:662.00px;font-size:14.47px;color:#333;font-weight:normal;transform:scaleX(0.9259);transform-origin:right top;">1,0</div>
<div class="t" style="left:516.50px;width:800px;text-align:right;top:662.00px;font-size:14.47px;color:#333;font-weight:normal;transform:scaleX(0.9259);transform-origin:right top;">1,0</div>
<div class="t" style="left:716.90px;width:800px;text-align:right;top:662.00px;font-size:14.47px;color:#333;font-weight:normal;transform:scaleX(0.9259);transform-origin:right top;">1,0</div>
<div class="r" style="left:43px;top:694px;width:1780px;height:1px;background:#e4e4e4;"></div>
<div class="t" style="left:46.30px;top:679.00px;font-size:14.47px;color:#333;font-weight:normal;transform:scaleX(0.9259);transform-origin:left top;">Главный инженер</div>
<div class="t" style="left:14.40px;width:800px;text-align:right;top:679.00px;font-size:14.47px;color:#333;font-weight:normal;transform:scaleX(0.9259);transform-origin:right top;">1,0</div>
<div class="t" style="left:114.70px;width:800px;text-align:right;top:679.00px;font-size:14.47px;color:#333;font-weight:normal;transform:scaleX(0.9259);transform-origin:right top;">1,0</div>
<div class="t" style="left:214.70px;width:800px;text-align:right;top:679.00px;font-size:14.47px;color:#333;font-weight:normal;transform:scaleX(0.9259);transform-origin:right top;">1,0</div>
<div class="t" style="left:716.90px;width:800px;text-align:right;top:679.00px;font-size:14.47px;color:#333;font-weight:normal;transform:scaleX(0.9259);transform-origin:right top;">1,0</div>
<div class="r" style="left:43px;top:712px;width:1780px;height:1px;background:#e4e4e4;"></div>
<div class="t" style="left:46.30px;top:697.00px;font-size:14.47px;color:#333;font-weight:normal;transform:scaleX(0.9259);transform-origin:left top;">Ведущий эксперт</div>
<div class="t" style="left:14.40px;width:800px;text-align:right;top:697.00px;font-size:14.47px;color:#333;font-weight:normal;transform:scaleX(0.9259);transform-origin:right top;">1,0</div>
<div class="t" style="left:114.70px;width:800px;text-align:right;top:697.00px;font-size:14.47px;color:#333;font-weight:normal;transform:scaleX(0.9259);transform-origin:right top;">1,0</div>
<div class="t" style="left:214.70px;width:800px;text-align:right;top:697.00px;font-size:14.47px;color:#333;font-weight:normal;transform:scaleX(0.9259);transform-origin:right top;">1,0</div>
<div class="t" style="left:716.90px;width:800px;text-align:right;top:697.00px;font-size:14.47px;color:#333;font-weight:normal;transform:scaleX(0.9259);transform-origin:right top;">1,0</div>
<div class="r" style="left:43px;top:730px;width:1780px;height:1px;background:#e4e4e4;"></div>
<div class="t" style="left:46.30px;top:715.00px;font-size:14.47px;color:#333;font-weight:normal;transform:scaleX(0.9259);transform-origin:left top;">Ведущий инженер</div>
<div class="t" style="left:14.40px;width:800px;text-align:right;top:715.00px;font-size:14.47px;color:#333;font-weight:normal;transform:scaleX(0.9259);transform-origin:right top;">1,0</div>
<div class="t" style="left:114.70px;width:800px;text-align:right;top:715.00px;font-size:14.47px;color:#333;font-weight:normal;transform:scaleX(0.9259);transform-origin:right top;">1,0</div>
<div class="t" style="left:214.70px;width:800px;text-align:right;top:715.00px;font-size:14.47px;color:#333;font-weight:normal;transform:scaleX(0.9259);transform-origin:right top;">1,0</div>
<div class="t" style="left:716.90px;width:800px;text-align:right;top:715.00px;font-size:14.47px;color:#333;font-weight:normal;transform:scaleX(0.9259);transform-origin:right top;">1,0</div>
<div class="r" style="left:43px;top:747px;width:1780px;height:1px;background:#e4e4e4;"></div>
<div class="t" style="left:46.30px;top:732.00px;font-size:14.47px;color:#333;font-weight:normal;transform:scaleX(0.9259);transform-origin:left top;">Эксперт</div>
<div class="t" style="left:14.40px;width:800px;text-align:right;top:732.00px;font-size:14.47px;color:#333;font-weight:normal;transform:scaleX(0.9259);transform-origin:right top;">4,0</div>
<div class="t" style="left:114.70px;width:800px;text-align:right;top:732.00px;font-size:14.47px;color:#333;font-weight:normal;transform:scaleX(0.9259);transform-origin:right top;">4,0</div>
<div class="t" style="left:214.70px;width:800px;text-align:right;top:732.00px;font-size:14.47px;color:#333;font-weight:normal;transform:scaleX(0.9259);transform-origin:right top;">4,0</div>
<div class="t" style="left:516.50px;width:800px;text-align:right;top:732.00px;font-size:14.47px;color:#333;font-weight:normal;transform:scaleX(0.9259);transform-origin:right top;">4,0</div>
<div class="t" style="left:716.90px;width:800px;text-align:right;top:732.00px;font-size:14.47px;color:#333;font-weight:normal;transform:scaleX(0.9259);transform-origin:right top;">4,0</div>
<div class="r" style="left:43px;top:765px;width:1780px;height:1px;background:#e4e4e4;"></div>
<div class="t" style="left:46.30px;top:750.00px;font-size:14.47px;color:#333;font-weight:normal;transform:scaleX(0.9259);transform-origin:left top;">Инженер</div>
<div class="t" style="left:14.40px;width:800px;text-align:right;top:750.00px;font-size:14.47px;color:#333;font-weight:normal;transform:scaleX(0.9259);transform-origin:right top;">2,0</div>
<div class="t" style="left:114.70px;width:800px;text-align:right;top:750.00px;font-size:14.47px;color:#333;font-weight:normal;transform:scaleX(0.9259);transform-origin:right top;">2,0</div>
<div class="t" style="left:214.70px;width:800px;text-align:right;top:750.00px;font-size:14.47px;color:#333;font-weight:normal;transform:scaleX(0.9259);transform-origin:right top;">2,0</div>
<div class="t" style="left:716.90px;width:800px;text-align:right;top:750.00px;font-size:14.47px;color:#333;font-weight:normal;transform:scaleX(0.9259);transform-origin:right top;">2,0</div>
<div class="r" style="left:43px;top:783px;width:1780px;height:1px;background:#e4e4e4;"></div>
<div class="t" style="left:46.30px;top:768.00px;font-size:14.47px;color:#333;font-weight:normal;transform:scaleX(0.9259);transform-origin:left top;">Сторож</div>
<div class="t" style="left:14.40px;width:800px;text-align:right;top:768.00px;font-size:14.47px;color:#333;font-weight:normal;transform:scaleX(0.9259);transform-origin:right top;">1,0</div>
<div class="t" style="left:114.70px;width:800px;text-align:right;top:768.00px;font-size:14.47px;color:#333;font-weight:normal;transform:scaleX(0.9259);transform-origin:right top;">1,0</div>
<div class="t" style="left:214.70px;width:800px;text-align:right;top:768.00px;font-size:14.47px;color:#333;font-weight:normal;transform:scaleX(0.9259);transform-origin:right top;">1,0</div>
<div class="t" style="left:716.90px;width:800px;text-align:right;top:768.00px;font-size:14.47px;color:#333;font-weight:normal;transform:scaleX(0.9259);transform-origin:right top;">2,0</div>
<div class="r" style="left:415.8px;top:500px;width:1px;height:284px;background:#e4e4e4;"></div>
<div class="r" style="left:515.6px;top:500px;width:1px;height:284px;background:#e4e4e4;"></div>
<div class="r" style="left:616.0px;top:500px;width:1px;height:284px;background:#e4e4e4;"></div>
<div class="r" style="left:715.8px;top:500px;width:1px;height:284px;background:#e4e4e4;"></div>
<div class="r" style="left:817.6px;top:500px;width:1px;height:284px;background:#e4e4e4;"></div>
<div class="r" style="left:917.9px;top:500px;width:1px;height:284px;background:#e4e4e4;"></div>
<div class="r" style="left:1017.9px;top:500px;width:1px;height:284px;background:#e4e4e4;"></div>
<div class="r" style="left:1118.2px;top:500px;width:1px;height:284px;background:#e4e4e4;"></div>
<div class="r" style="left:1219.4px;top:500px;width:1px;height:284px;background:#e4e4e4;"></div>
<div class="r" style="left:1319.7px;top:500px;width:1px;height:284px;background:#e4e4e4;"></div>
<div class="r" style="left:1420.0px;top:500px;width:1px;height:284px;background:#e4e4e4;"></div>
<div class="r" style="left:1520.1px;top:500px;width:1px;height:284px;background:#e4e4e4;"></div>
<div class="r" style="left:1621.4px;top:500px;width:1px;height:284px;background:#e4e4e4;"></div>
<div class="r" style="left:1721.8px;top:500px;width:1px;height:284px;background:#e4e4e4;"></div>
<div class="r" style="left:1821.9px;top:500px;width:1px;height:284px;background:#e4e4e4;"></div>
<div class="r" style="left:43px;top:780.3px;width:84.5px;height:16px;background:#f7f7f7;border:1px solid #ebebeb;box-sizing:border-box;"></div>
<div class="r" style="left:43px;top:783px;width:84.5px;height:1px;background:#e8e8e8;"></div>
</body></html>
